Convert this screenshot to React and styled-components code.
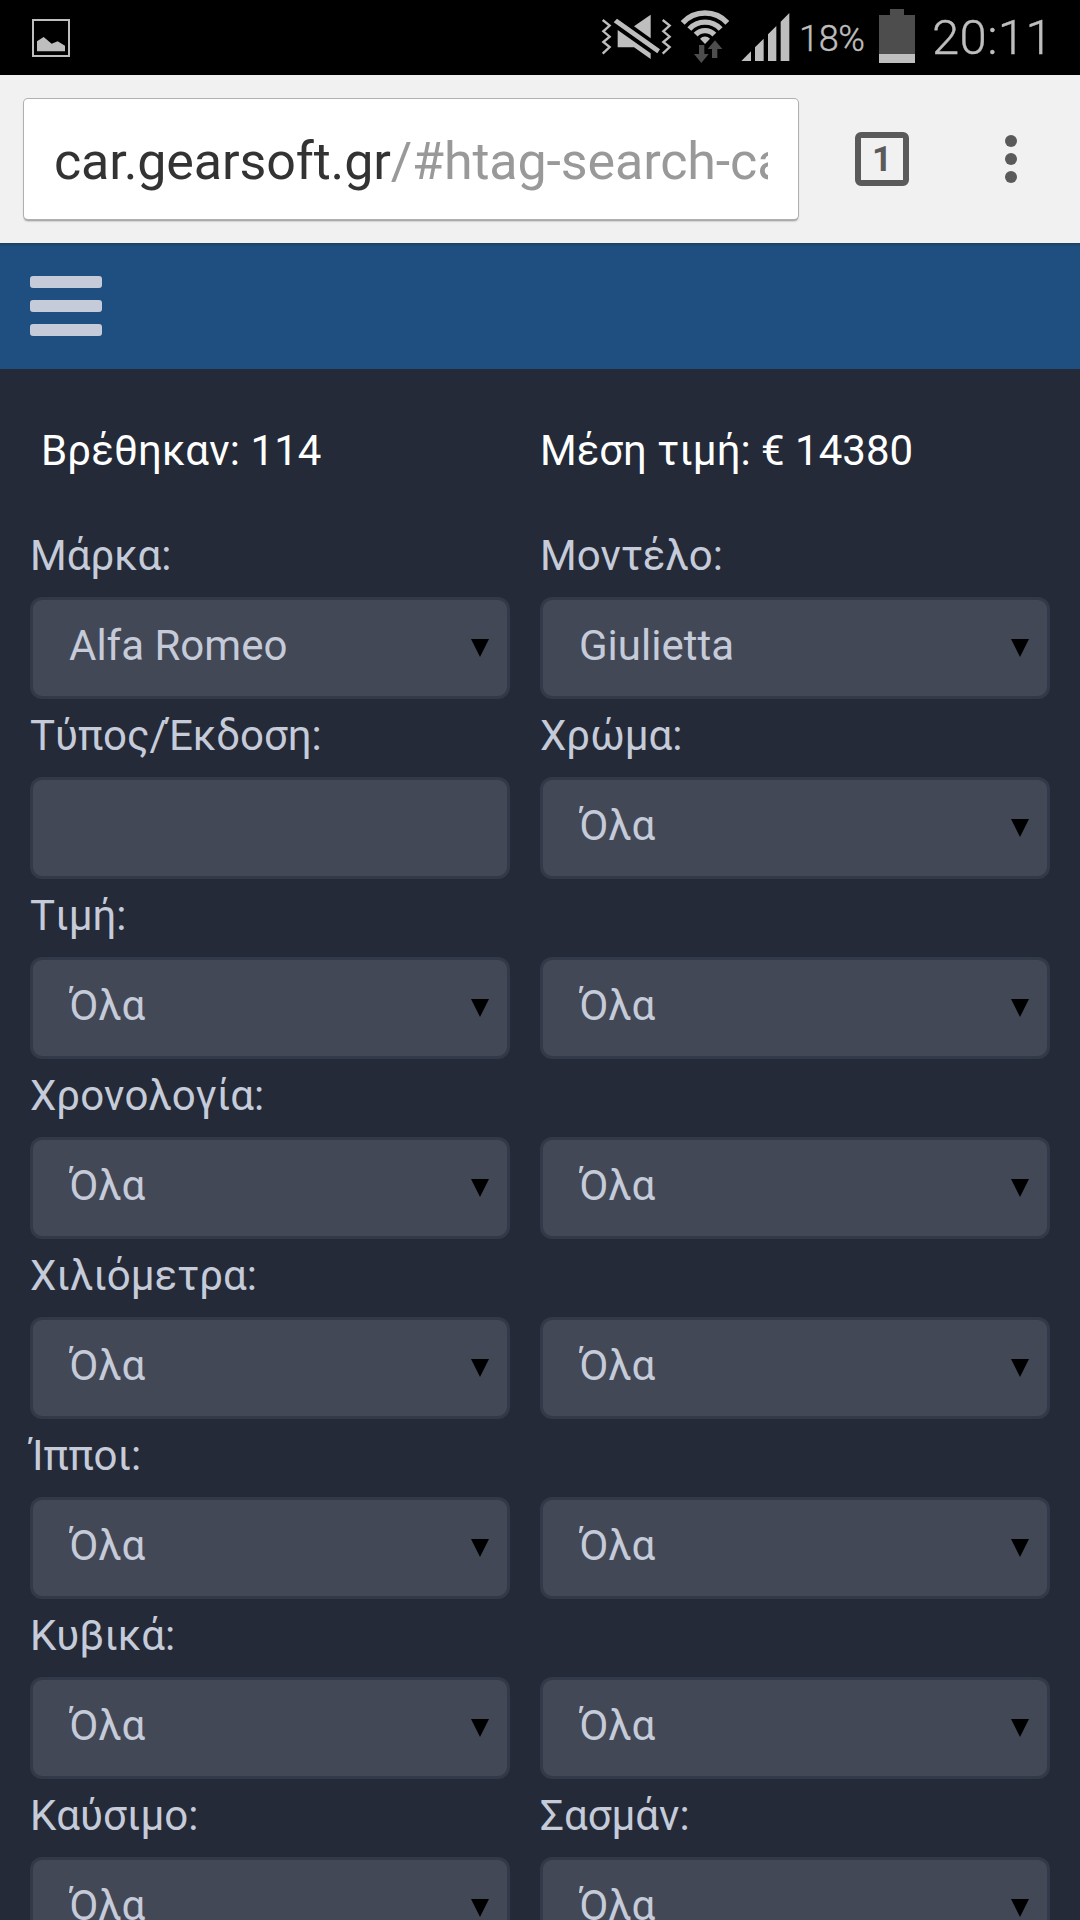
import styled, { createGlobalStyle } from 'styled-components';

const GlobalStyle = createGlobalStyle`
  * {
    box-sizing: border-box;
  }

  body {
    margin: 0;
    background: #242a37;
    font-family: Roboto, 'Noto Sans', sans-serif;
  }
`;

const Screen = styled.div`
  width: 1080px;
  height: 1920px;
  overflow: hidden;
  background: #242a37;
`;

// Android status bar
const StatusBar = styled.header`
  display: flex;
  align-items: center;
  height: 75px;
  padding: 0 30px 0 32px;
  background: #000;
  color: #bebebe;
  font-weight: 300;
  white-space: nowrap;
  -webkit-text-stroke: 0.4px #bebebe;
`;

const StatusIcons = styled.div`
  display: flex;
  margin-left: auto;
`;

const StatusIcon = styled.svg`
  display: block;
  flex: none;
  width: ${({ $width }) => $width}px;
  height: 75px;
  margin-left: ${({ $gap }) => $gap || 0}px;
`;

const BatteryLevel = styled.span`
  width: 89px;
  padding: 2px 0 0 9px;
  font-size: 36px;
  letter-spacing: -0.3px;
`;

const Clock = styled.span`
  width: 118px;
  margin-left: 17px;
  font-size: 49px;
  letter-spacing: 0.4px;
`;

// Browser toolbar
const Toolbar = styled.div`
  display: flex;
  align-items: center;
  height: 168px;
  padding: 0 63px 0 24px;
  background: #f1f1f1;
`;

const AddressBar = styled.div`
  width: 774px;
  height: 120px;
  padding: 0 30px;
  border-radius: 4px;
  background: #fff;
  box-shadow: 0 0 0 1px #b0b0b0, 0 2px 2px rgba(0, 0, 0, 0.4);
`;

const Url = styled.div`
  overflow: hidden;
  color: #999;
  font-size: 52px;
  line-height: 126px;
  letter-spacing: -0.12px;
  white-space: nowrap;
`;

const Host = styled.span`
  color: #333;
`;

const TabCount = styled.button`
  display: flex;
  align-items: center;
  justify-content: center;
  width: 54px;
  height: 54px;
  margin: 0 0 0 57px;
  padding: 0;
  border: 6px solid #5a5a5a;
  border-radius: 6px;
  background: none;
  color: #5a5a5a;
  font: 700 35px Roboto, sans-serif;
`;

const MoreButton = styled.button`
  display: grid;
  gap: 6px;
  margin: 0 0 0 auto;
  padding: 0;
  border: 0;
  background: none;
`;

const Dot = styled.span`
  width: 12px;
  height: 12px;
  border-radius: 50%;
  background: #5a5a5a;
`;

// Site navigation
const Nav = styled.nav`
  display: flex;
  align-items: center;
  height: 126px;
  padding: 0 30px;
  background: linear-gradient(#1b4263, #1e4f80 4px);
`;

const MenuButton = styled.button`
  display: grid;
  gap: 12px;
  padding: 0;
  border: 0;
  background: none;
`;

const MenuLine = styled.span`
  width: 72px;
  height: 12px;
  border-radius: 3px;
  background: #c5cbd9;
`;

// Search form
const SearchForm = styled.form`
  padding: 0 30px;
  color: #c5cbd9;
  font-size: 42px;
  font-kerning: none;
`;

const Row = styled.div`
  display: grid;
  grid-template-columns: 480px 510px;
  column-gap: 30px;
`;

const Summary = styled(Row)`
  height: 150px;
  padding-top: 45px;
  color: #fff;
  line-height: 74px;
`;

const Found = styled.span`
  padding-left: 11px;
  letter-spacing: 0.1px;
`;

const Field = styled.label`
  display: block;
  height: 180px;
`;

const FieldLabel = styled.span`
  display: block;
  height: 78px;
  line-height: 74px;
`;

const Control = styled.span`
  position: relative;
  display: block;
  height: 102px;
`;

const controlStyles = `
  display: block;
  width: 100%;
  height: 102px;
  border: 3px solid #323948;
  border-radius: 12px;
  outline: 0;
  background: #434857;
  color: #c5cbd9;
  font-family: inherit;
  font-size: 42px;
  font-kerning: none;
`;

const Select = styled.select`
  ${controlStyles}
  appearance: none;
  padding: 0 60px 6px 36px;
`;

const TextInput = styled.input`
  ${controlStyles}
  padding: 0 36px;
`;

const Caret = styled.svg`
  position: absolute;
  top: 42px;
  right: 21px;
  width: 18px;
  height: 18px;
  pointer-events: none;
`;

const ALL = 'Όλα';

const rows = [
  [
    { label: 'Μάρκα:', value: 'Alfa Romeo' },
    { label: 'Μοντέλο:', value: 'Giulietta' },
  ],
  [
    { label: 'Τύπος/Έκδοση:', text: true },
    { label: 'Χρώμα:', value: ALL },
  ],
  [{ label: 'Τιμή:', value: ALL }, { value: ALL }],
  [{ label: 'Χρονολογία:', value: ALL }, { value: ALL }],
  [{ label: 'Χιλιόμετρα:', value: ALL }, { value: ALL }],
  [{ label: 'Ίπποι:', value: ALL }, { value: ALL }],
  [{ label: 'Κυβικά:', value: ALL }, { value: ALL }],
  [
    { label: 'Καύσιμο:', value: ALL },
    { label: 'Σασμάν:', value: ALL },
  ],
];

const PictureIcon = () => (
  <StatusIcon $width={38} viewBox="96 0 114 225">
    <rect x="99" y="60" width="108" height="108" fill="none" stroke="#bebebe" strokeWidth="6" />
    <path d="M111 154v-30l20-13 24 20 18-7 22 13v17z" fill="#bebebe" />
  </StatusIcon>
);

const MuteIcon = () => (
  <StatusIcon $width={72} viewBox="60 0 216 225">
    <g fill="none" stroke="#bebebe" strokeWidth="7">
      <path d="M68 60l21 17-19 17 19 16-19 16 19 15-21 20" />
      <path d="M248 60l21 17-19 17 19 16-19 16 19 15-21 20" />
    </g>
    <g fill="#bebebe">
      <path d="M101 67l10-11 129 92-8 12z" />
      <path d="M162 79l50-35v71z" />
      <path d="M113 90l99 70v17l-50-35h-49z" />
    </g>
  </StatusIcon>
);

const WifiIcon = () => (
  <StatusIcon $width={50} $gap={8} viewBox="300 0 150 225">
    <g fill="none" stroke="#bebebe" strokeWidth="16">
      <path d="M308 68.5a91 91 0 0 1 134 0" />
      <path d="M328 87a64 64 0 0 1 94 0" />
      <path d="M347 104a38 38 0 0 1 56 0" />
    </g>
    <path d="M360 116a21 21 0 0 1 30 0l-15 16z" fill="#bebebe" />
    <path
      d="M357 135h16v27h13l-22 27-22-27h15zM396 174v-27h-13l22-26 22 26h-15v27z"
      fill="#4d4d4d"
    />
  </StatusIcon>
);

const SignalIcon = () => (
  <StatusIcon $width={49} $gap={11} viewBox="483 0 147 225">
    <path
      d="M484 183l29-29v29zM525 183v-41l26-26v67zM564 183v-80l25-25v105zM602 183v-118l26-26v144z"
      fill="#bebebe"
    />
  </StatusIcon>
);

const BatteryIcon = () => (
  <StatusIcon $width={36} viewBox="177 0 108 225">
    <path d="M177 45h33v-18h42v18h33v117h-108z" fill="#4d4d4d" />
    <path d="M177 162h108v27h-108z" fill="#bebebe" />
  </StatusIcon>
);

const FormField = ({ label, value, text }) => (
  <Field>
    <FieldLabel>{label}</FieldLabel>
    <Control>
      {text ? (
        <TextInput type="text" />
      ) : (
        <>
          <Select defaultValue={value}>
            <option>{value}</option>
          </Select>
          <Caret viewBox="0 0 18 18">
            <path d="M0 0h18L9 18z" />
          </Caret>
        </>
      )}
    </Control>
  </Field>
);

const App = () => {
  return (
    <>
      <GlobalStyle />
      <Screen>
        <StatusBar>
          <PictureIcon />
          <StatusIcons>
            <MuteIcon />
            <WifiIcon />
            <SignalIcon />
          </StatusIcons>
          <BatteryLevel>18%</BatteryLevel>
          <BatteryIcon />
          <Clock>20:11</Clock>
        </StatusBar>
        <Toolbar>
          <AddressBar>
            <Url>
              <Host>car.gearsoft.gr</Host>/#htag-search-cars
            </Url>
          </AddressBar>
          <TabCount>1</TabCount>
          <MoreButton>
            <Dot />
            <Dot />
            <Dot />
          </MoreButton>
        </Toolbar>
        <Nav>
          <MenuButton>
            <MenuLine />
            <MenuLine />
            <MenuLine />
          </MenuButton>
        </Nav>
        <SearchForm>
          <Summary>
            <Found>Βρέθηκαν: 114</Found>
            <span>Μέση τιμή: € 14380</span>
          </Summary>
          {rows.map((fields, index) => (
            <Row key={index}>
              {fields.map((field, column) => (
                <FormField key={column} {...field} />
              ))}
            </Row>
          ))}
        </SearchForm>
      </Screen>
    </>
  );
};

export default App;
